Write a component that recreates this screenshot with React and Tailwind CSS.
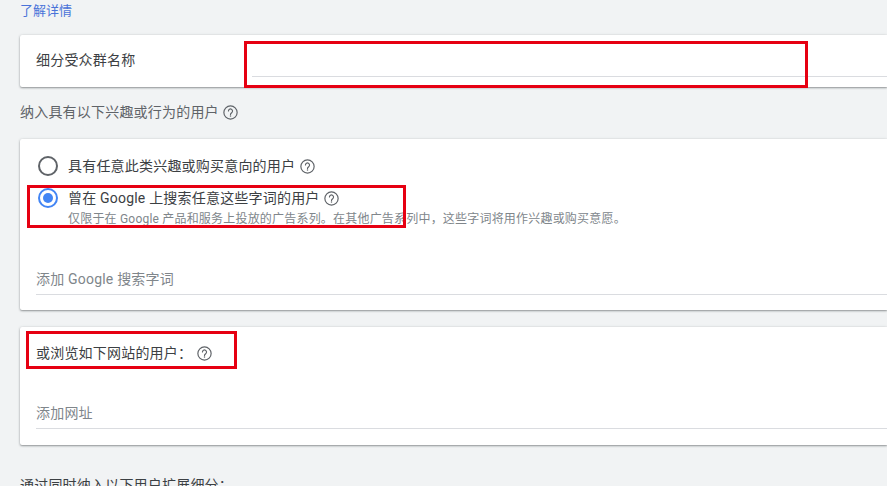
import React from 'react';

const fontStack = 'font-["Roboto","Noto_Sans_CJK_SC",sans-serif]';

const HelpIcon = ({ className = '' }) => (
  <svg viewBox="0 0 14 14" className={`w-[15px] h-[15px] shrink-0 ${className}`} fill="none">
    <circle cx="7" cy="7" r="6.2" stroke="#5f6368" strokeWidth="1.1" />
    <path
      d="M5.1 5.6a1.9 1.9 0 1 1 3 1.55c-.7.5-1.1.8-1.1 1.6"
      stroke="#5f6368"
      strokeWidth="1.1"
      strokeLinecap="round"
    />
    <circle cx="7" cy="10.3" r=".7" fill="#5f6368" />
  </svg>
);

const Underlined = ({ placeholder, className = '' }) => (
  <div className={`border-b border-[#dadce0] text-sm leading-5 tracking-[0.2px] text-[#80868b] ${className}`}>{placeholder}</div>
);

const Card = ({ className = '', children }) => (
  <div className={`relative ml-5 rounded-l-[2px] bg-white shadow-[0_1px_2px_rgba(60,64,67,0.5),0_0_3px_rgba(60,64,67,0.12)] ${className}`}>
    {children}
  </div>
);

const RedBox = ({ className = '' }) => (
  <div className={`absolute border-[3px] border-[#e60012] pointer-events-none ${className}`} />
);

export default function App() {
  return (
    <div className={`relative h-[486px] overflow-hidden bg-[#f1f3f4] tracking-[0.2px] ${fontStack}`}>
      <a className="block pl-5 pt-[2px] text-[13px] leading-[18px] tracking-normal text-[#4a73d9]">了解详情</a>

      <Card className="mt-[15px] h-[52px]">
        <div className="flex h-full">
          <div className="w-[232px] pl-4 pt-[15px] text-sm leading-5 text-[#3c4043]">细分受众群名称</div>
          <div className="flex-1 h-[42px] border-b border-[#dadce0]" />
        </div>
      </Card>

      <div className="mt-[15px] ml-5 flex items-center gap-[4px] text-sm leading-5 text-[#5f6368]">
        纳入具有以下兴趣或行为的用户
        <HelpIcon />
      </div>

      <Card className="mt-[17px] h-[171px] pl-4 pt-[17px]">
        <div className="flex items-center gap-[10px] pl-[2px]">
          <span className="h-5 w-5 rounded-full border-2 border-[#5f6368]" />
          <span className="text-sm leading-5 text-[#3c4043]">具有任意此类兴趣或购买意向的用户</span>
          <HelpIcon className="-ml-[5px]" />
        </div>
        <div className="mt-3 flex items-center gap-[10px] pl-[2px]">
          <span className="flex h-5 w-5 items-center justify-center rounded-full border-2 border-[#4285f4]">
            <span className="h-[10px] w-[10px] rounded-full bg-[#4285f4]" />
          </span>
          <span className="text-sm leading-[19px] text-[#3c4043]">曾在 Google 上搜索任意这些字词的用户</span>
          <HelpIcon className="-ml-[6px]" />
        </div>
        <div className="pl-8 mt-[3px] text-xs leading-4 text-[#80868b]">
          仅限于在 Google 产品和服务上投放的广告系列。在其他广告系列中，这些字词将用作兴趣或购买意愿。
        </div>
        <Underlined placeholder="添加 Google 搜索字词" className="mt-[42px] pb-[5px]" />
      </Card>

      <Card className="mt-[17px] h-[118px] pl-4 pt-[16px]">
        <div className="flex items-center gap-[5px] text-sm leading-5 text-[#3c4043]">
          或浏览如下网站的用户：
          <HelpIcon />
        </div>
        <Underlined placeholder="添加网址" className="mt-[40px] pb-[5px]" />
      </Card>

      <div className="mt-[30px] ml-5 text-sm leading-5 text-[#3c4043]">通过同时纳入以下用户扩展细分：</div>

      <RedBox className="left-[244px] top-[41px] h-[47px] w-[564px]" />
      <RedBox className="left-[27px] top-[185px] h-[43px] w-[379px]" />
      <RedBox className="left-[26px] top-[331px] h-[38px] w-[211px]" />
    </div>
  );
}
